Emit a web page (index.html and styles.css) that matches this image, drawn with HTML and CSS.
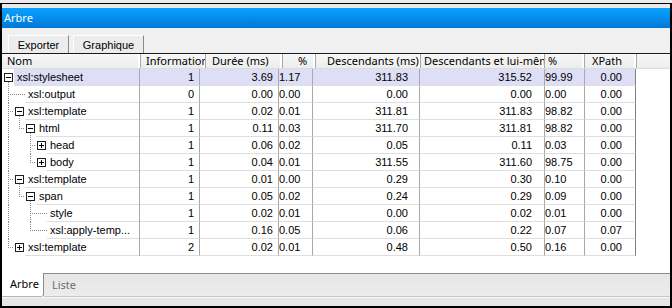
FILE: index.html
```html
<!DOCTYPE html>
<html lang="fr">
<head>
    <meta charset="UTF-8">
    <title>Arbre</title>
    <link rel="stylesheet" href="styles.css">
</head>
<body>
    <div class="topline"></div>
    <div class="window">
        <div class="gap"></div>
        <div class="titlebar">Arbre</div>

        <div class="toolbar">
            <button class="btn btn-export">Exporter</button>
            <button class="btn btn-graph">Graphique</button>
        </div>

        <div class="grid">
            <div class="head">
                <div class="hc c-name">Nom</div>
                <div class="hc c-info">Information</div>
                <div class="hc c-dur">Durée (ms)</div>
                <div class="hc c-pct">%</div>
                <div class="hc c-desc">Descendants (ms)</div>
                <div class="hc c-self">Descendants et lui-même</div>
                <div class="hc c-pct2">%</div>
                <div class="hc c-xp">XPath</div>
                <div class="hc c-fill"></div>
            </div>

            <div class="row sel">
                <div class="cell c-name"><i class="u box open"><b class="tg"></b></i><span class="label">xsl:stylesheet</span></div>
                <div class="cell c-info">1</div><div class="cell c-dur">3.69</div><div class="cell c-pct">1.17</div><div class="cell c-desc">311.83</div><div class="cell c-self">315.52</div><div class="cell c-pct2">99.99</div><div class="cell c-xp">0.00</div><div class="cell c-fill"></div>
            </div>
            <div class="row">
                <div class="cell c-name"><i class="u tee"></i><i class="u leaf"></i><span class="label">xsl:output</span></div>
                <div class="cell c-info">0</div><div class="cell c-dur">0.00</div><div class="cell c-pct">0.00</div><div class="cell c-desc">0.00</div><div class="cell c-self">0.00</div><div class="cell c-pct2">0.00</div><div class="cell c-xp">0.00</div><div class="cell c-fill"></div>
            </div>
            <div class="row">
                <div class="cell c-name"><i class="u tee"></i><i class="u box open"><b class="tg"></b></i><span class="label">xsl:template</span></div>
                <div class="cell c-info">1</div><div class="cell c-dur">0.02</div><div class="cell c-pct">0.01</div><div class="cell c-desc">311.81</div><div class="cell c-self">311.83</div><div class="cell c-pct2">98.82</div><div class="cell c-xp">0.00</div><div class="cell c-fill"></div>
            </div>
            <div class="row">
                <div class="cell c-name"><i class="u pipe"></i><i class="u elbow"></i><i class="u box open"><b class="tg"></b></i><span class="label">html</span></div>
                <div class="cell c-info">1</div><div class="cell c-dur">0.11</div><div class="cell c-pct">0.03</div><div class="cell c-desc">311.70</div><div class="cell c-self">311.81</div><div class="cell c-pct2">98.82</div><div class="cell c-xp">0.00</div><div class="cell c-fill"></div>
            </div>
            <div class="row">
                <div class="cell c-name"><i class="u pipe"></i><i class="u"></i><i class="u tee"></i><i class="u box"><b class="tg plus"></b></i><span class="label">head</span></div>
                <div class="cell c-info">1</div><div class="cell c-dur">0.06</div><div class="cell c-pct">0.02</div><div class="cell c-desc">0.05</div><div class="cell c-self">0.11</div><div class="cell c-pct2">0.03</div><div class="cell c-xp">0.00</div><div class="cell c-fill"></div>
            </div>
            <div class="row">
                <div class="cell c-name"><i class="u pipe"></i><i class="u"></i><i class="u elbow"></i><i class="u box"><b class="tg plus"></b></i><span class="label">body</span></div>
                <div class="cell c-info">1</div><div class="cell c-dur">0.04</div><div class="cell c-pct">0.01</div><div class="cell c-desc">311.55</div><div class="cell c-self">311.60</div><div class="cell c-pct2">98.75</div><div class="cell c-xp">0.00</div><div class="cell c-fill"></div>
            </div>
            <div class="row">
                <div class="cell c-name"><i class="u tee"></i><i class="u box open"><b class="tg"></b></i><span class="label">xsl:template</span></div>
                <div class="cell c-info">1</div><div class="cell c-dur">0.01</div><div class="cell c-pct">0.00</div><div class="cell c-desc">0.29</div><div class="cell c-self">0.30</div><div class="cell c-pct2">0.10</div><div class="cell c-xp">0.00</div><div class="cell c-fill"></div>
            </div>
            <div class="row">
                <div class="cell c-name"><i class="u pipe"></i><i class="u elbow"></i><i class="u box open"><b class="tg"></b></i><span class="label">span</span></div>
                <div class="cell c-info">1</div><div class="cell c-dur">0.05</div><div class="cell c-pct">0.02</div><div class="cell c-desc">0.24</div><div class="cell c-self">0.29</div><div class="cell c-pct2">0.09</div><div class="cell c-xp">0.00</div><div class="cell c-fill"></div>
            </div>
            <div class="row">
                <div class="cell c-name"><i class="u pipe"></i><i class="u"></i><i class="u tee"></i><i class="u leaf"></i><span class="label">style</span></div>
                <div class="cell c-info">1</div><div class="cell c-dur">0.02</div><div class="cell c-pct">0.01</div><div class="cell c-desc">0.00</div><div class="cell c-self">0.02</div><div class="cell c-pct2">0.01</div><div class="cell c-xp">0.00</div><div class="cell c-fill"></div>
            </div>
            <div class="row">
                <div class="cell c-name"><i class="u pipe"></i><i class="u"></i><i class="u elbow"></i><i class="u leaf"></i><span class="label">xsl:apply-temp...</span></div>
                <div class="cell c-info">1</div><div class="cell c-dur">0.16</div><div class="cell c-pct">0.05</div><div class="cell c-desc">0.06</div><div class="cell c-self">0.22</div><div class="cell c-pct2">0.07</div><div class="cell c-xp">0.07</div><div class="cell c-fill"></div>
            </div>
            <div class="row">
                <div class="cell c-name"><i class="u elbow"></i><i class="u box"><b class="tg plus"></b></i><span class="label">xsl:template</span></div>
                <div class="cell c-info">2</div><div class="cell c-dur">0.02</div><div class="cell c-pct">0.01</div><div class="cell c-desc">0.48</div><div class="cell c-self">0.50</div><div class="cell c-pct2">0.16</div><div class="cell c-xp">0.00</div><div class="cell c-fill"></div>
            </div>
        </div>

        <div class="tabs">
            <div class="tab active">Arbre</div>
            <div class="tab-rest"><span class="tab">Liste</span></div>
        </div>
        <div class="status"></div>
    </div>
</body>
</html>
```

FILE: styles.css
```css
* {
    box-sizing: border-box;
    margin: 0;
    padding: 0;
}

body {
    width: 672px;
    height: 308px;
    overflow: hidden;
    background: #ececec;
    font-family: 'Liberation Sans', Arial, sans-serif;
    font-size: 11px;
    color: #000;
}

.topline {
    height: 3px;
    background: #ececec;
}

.window {
    height: 305px;
    display: flex;
    flex-direction: column;
    border: 2px solid #000;
    border-top-width: 1px;
    background: #f0f0f0;
}

.gap {
    height: 4px;
    background: #e9e9e9;
}

.titlebar {
    height: 20px;
    line-height: 20px;
    padding-left: 2px;
    color: #fff;
    font-family: 'Noto Sans', sans-serif;
    font-size: 11px;
    background: linear-gradient(#0aa2ff, #0078d7);
}

.toolbar {
    height: 26px;
    display: flex;
    align-items: flex-end;
    gap: 4px;
    padding-left: 6px;
    background: #f0f0f0;
    border-bottom: 1px solid #1a1a1a;
}

.btn {
    height: 18px;
    font-family: 'Liberation Sans', Arial, sans-serif;
    font-size: 11px;
    color: #000;
    background: #ececec;
    border: 1px solid;
    border-color: #fff #8a8a8a #8a8a8a #fff;
    border-bottom: none;
}

.btn-export { width: 61px; }
.btn-graph { width: 71px; }

/* list view */
.grid {
    flex: 1;
    background: #fff;
}

.head {
    height: 15px;
    display: flex;
    background: linear-gradient(#f7f7f7, #ededed);
    border-bottom: 1px solid #dcdcdc;
    font-family: 'Noto Sans', sans-serif;
    font-size: 11px;
    line-height: 14px;
}

.hc {
    flex: none;
    overflow: hidden;
    white-space: nowrap;
    text-overflow: clip;
    border-right: 1px solid #a8a8a8;
    box-shadow: inset -2px 0 0 #fff;
}

.head .c-name { width: 139px; padding-left: 5px; }
.head .c-info { width: 65px; padding-left: 5px; }
.head .c-dur  { width: 77px; padding-left: 6px; }
.head .c-pct  { width: 33px; padding-left: 15px; }
.head .c-desc { width: 105px; padding-left: 11px; }
.head .c-self { width: 124px; padding-left: 3px; }
.head .c-pct2 { width: 40px; padding-left: 3px; }
.head .c-xp   { width: 52px; padding-left: 7px; }
.head .c-fill { flex: 1; border-right: none; box-shadow: none; }

.row {
    height: 17px;
    display: flex;
    line-height: 16px;
}

.cell {
    flex: none;
    white-space: nowrap;
    overflow: hidden;
    text-align: right;
    border-right: 1px solid #a9a9a9;
    border-bottom: 1px solid #dedede;
}

.row .c-name {
    width: 138px;
    display: flex;
    text-align: left;
    border-bottom: none;
}

.row .c-info { width: 60px; padding-right: 5px; }
.row .c-dur  { width: 79px; padding-right: 5px; }
.row .c-pct  { width: 34px; padding-right: 12px; }
.row .c-desc { width: 107px; padding-right: 11px; }
.row .c-self { width: 125px; padding-right: 12px; }
.row .c-pct2 { width: 40px; padding-right: 20px; }
.row .c-xp   { width: 51px; padding-right: 13px; border-right-color: #808080; }
.row .c-fill { flex: 1; border: none; }

.label {
    flex: 1;
    padding-left: 3px;
    border-bottom: 1px solid #dedede;
}

.sel .cell,
.sel .label {
    background: #dedef6;
}

.sel .c-name,
.sel .c-fill {
    background: none;
}

/* tree guides */
.u {
    --v: repeating-linear-gradient(#8a8a8a 0 1px, transparent 1px 2px);
    --h: repeating-linear-gradient(90deg, #8a8a8a 0 1px, transparent 1px 2px);
    flex: none;
    width: 11px;
    height: 17px;
    background-repeat: no-repeat;
}

.row .c-name > .u:first-child { margin-left: 1px; }

.pipe {
    background-image: var(--v);
    background-size: 1px 17px;
    background-position: 5px 0;
}

.tee {
    background-image: var(--v), var(--h);
    background-size: 1px 17px, 6px 1px;
    background-position: 5px 0, 5px 8px;
}

.elbow {
    background-image: var(--v), var(--h);
    background-size: 1px 9px, 6px 1px;
    background-position: 5px 0, 5px 8px;
}

.leaf {
    background-image: var(--h);
    background-size: 11px 1px;
    background-position: 0 8px;
}

.box {
    display: flex;
    align-items: center;
}

.box.open {
    background-image: var(--v);
    background-size: 1px 4px;
    background-position: 5px 13px;
}

.tg {
    width: 9px;
    height: 9px;
    margin-left: 1px;
    border: 1px solid #1e1e1e;
    background: linear-gradient(#000, #000) center / 5px 1px no-repeat, #fff;
}

.tg.plus {
    background:
        linear-gradient(#000, #000) center / 5px 1px no-repeat,
        linear-gradient(#000, #000) center / 1px 5px no-repeat,
        #fff;
}

/* bottom tabs */
.tabs {
    height: 24px;
    display: flex;
    font-family: 'Noto Sans', sans-serif;
    font-size: 11px;
    line-height: 22px;
    background: #fff;
}

.tab.active {
    width: 42px;
    padding-left: 8px;
    background: #fff;
    border-right: 1px solid #8c8c8c;
    border-bottom: 1px solid #b4b4b4;
    border-bottom-right-radius: 3px;
}

.tab-rest {
    flex: 1;
    padding-left: 8px;
    color: #6e6e6e;
    background: linear-gradient(#e6e6e6, #ececec);
    border-top: 1px solid #8c8c8c;
    border-bottom: 1px solid #c8c8c8;
}

.status {
    height: 9px;
    background: #e6e6e6;
    border-top: 1px solid #f6f6f6;
}
```
